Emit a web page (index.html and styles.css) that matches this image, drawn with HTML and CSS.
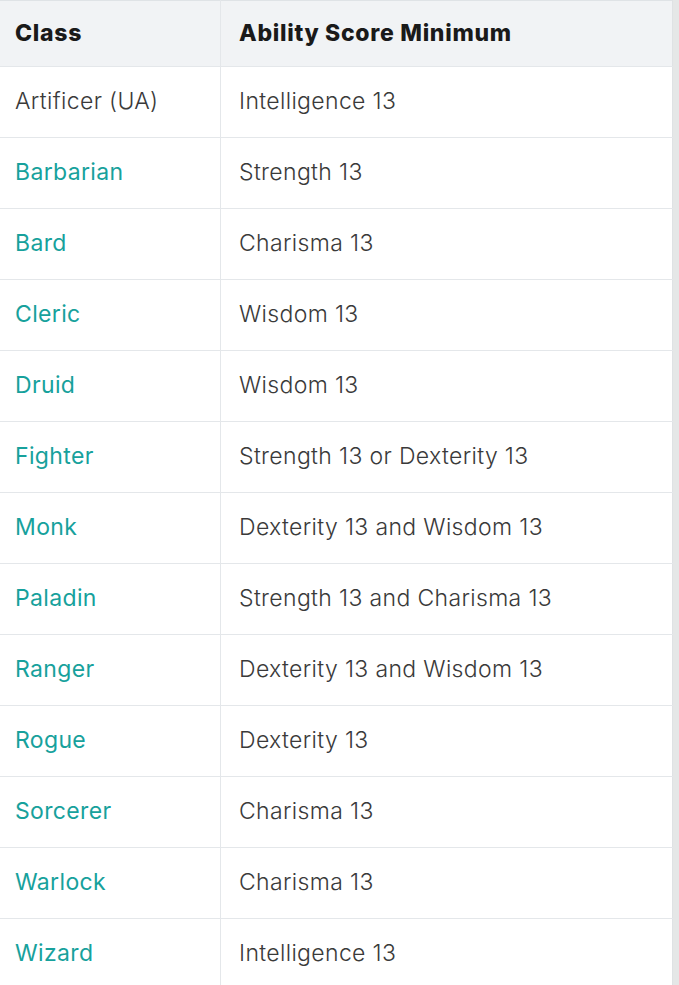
FILE: index.html
```html
<!DOCTYPE html>
<html>
<head>
<meta charset="utf-8">
<link rel="stylesheet" href="styles.css">
</head>
<body>
<div class="wrap">
<table class="tbl">
<thead>
<tr><th class="c1">Class</th><th class="c2">Ability Score Minimum</th></tr>
</thead>
<tbody>
<tr><td class="c1">Artificer (UA)</td><td class="c2">Intelligence 13</td></tr>
<tr><td class="c1"><a class="link">Barbarian</a></td><td class="c2">Strength 13</td></tr>
<tr><td class="c1"><a class="link">Bard</a></td><td class="c2">Charisma 13</td></tr>
<tr><td class="c1"><a class="link">Cleric</a></td><td class="c2">Wisdom 13</td></tr>
<tr><td class="c1"><a class="link">Druid</a></td><td class="c2">Wisdom 13</td></tr>
<tr><td class="c1"><a class="link">Fighter</a></td><td class="c2">Strength 13 or Dexterity 13</td></tr>
<tr><td class="c1"><a class="link">Monk</a></td><td class="c2">Dexterity 13 and Wisdom 13</td></tr>
<tr><td class="c1"><a class="link">Paladin</a></td><td class="c2">Strength 13 and Charisma 13</td></tr>
<tr><td class="c1"><a class="link">Ranger</a></td><td class="c2">Dexterity 13 and Wisdom 13</td></tr>
<tr><td class="c1"><a class="link">Rogue</a></td><td class="c2">Dexterity 13</td></tr>
<tr><td class="c1"><a class="link">Sorcerer</a></td><td class="c2">Charisma 13</td></tr>
<tr><td class="c1"><a class="link">Warlock</a></td><td class="c2">Charisma 13</td></tr>
<tr><td class="c1"><a class="link">Wizard</a></td><td class="c2">Intelligence 13</td></tr>
</tbody>
</table>
</div>
</body>
</html>
```
FILE: styles.css
```css
html, body {
  margin: 0;
  padding: 0;
  background: #e5e7e7;
}
.wrap {
  width: 673px;
  background: #ffffff;
  overflow: hidden;
  height: 985px;
}
.tbl {
  width: 673px;
  border-collapse: collapse;
  table-layout: fixed;
  font-family: Inter, "Noto Sans", sans-serif;
  font-size: 23px;
  color: #3a3a3a;
}
.tbl th, .tbl td {
  text-align: left;
  padding: 0 0 2px 15px;
  height: 68px;
  border-top: 1px solid #e4e7ea;
  border-bottom: 1px solid #e4e7ea;
  vertical-align: middle;
}
.tbl th {
  height: 63px;
  background: #f1f3f5;
  font-weight: 800;
  letter-spacing: 0.7px;
  color: #1a1a1a;
  border-top: 1px solid #dfe3e6;
}
.tbl .c1 {
  width: 205px;
  border-right: 1px solid #e4e7ea;
}
.tbl .c2 {
  padding-left: 18px;
  border-right: 1px solid #dfe2e4;
}
.tbl td {
  font-weight: 300;
  letter-spacing: 0.35px;
}
.link {
  color: #17a19c;
  font-weight: 400;
  text-decoration: none;
}
```
